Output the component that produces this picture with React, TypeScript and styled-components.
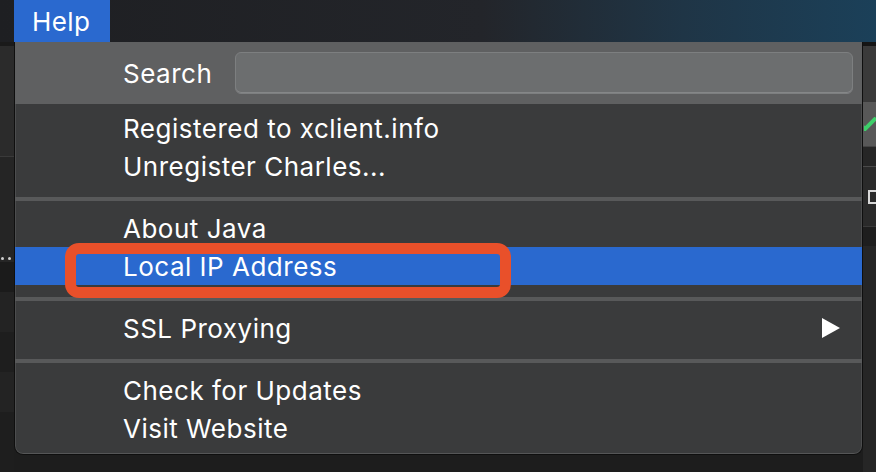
import React from "react";
import styled, { createGlobalStyle } from "styled-components";

const GlobalStyle = createGlobalStyle`
  html, body { margin: 0; padding: 0; background: #1d1d1d; overflow: hidden; }
  * { box-sizing: border-box; }
`;

const Screen = styled.div`
  width: 876px;
  height: 472px;
  display: flex;
  flex-direction: column;
  font-family: Inter, "Liberation Sans", sans-serif;
  color: #fff;
  background: #1d1d1d;
  overflow: hidden;
`;

const TopBar = styled.div`
  height: 42px;
  flex: none;
  display: flex;
  padding-left: 14px;
  background: linear-gradient(90deg, #1e1f22 0%, #23252a 55%, #1f3546 78%, #1b4059 100%);
`;

const TopMenu = styled.div`
  width: 96px;
  height: 42px;
  display: flex;
  align-items: center;
  padding-left: 18px;
  background: #2a69cf;
  font-size: 26px;
  letter-spacing: 0.4px;
`;

const Body = styled.div`
  flex: 1;
  display: flex;
  min-height: 0;
`;

const SideStrip = styled.div<{ $w: number }>`
  width: ${(p) => p.$w}px;
  flex: none;
  display: flex;
  flex-direction: column;
  background: #242424;
`;

const StripBand = styled.div<{ $h: number; $bg: string; $line?: string }>`
  height: ${(p) => p.$h}px;
  flex: none;
  background: ${(p) => p.$bg};
  border-top: ${(p) => (p.$line ? `1px solid ${p.$line}` : "none")};
  display: flex;
  align-items: center;
  gap: 4px;
  padding-left: 1px;
  overflow: hidden;
`;

const Dot = styled.span`
  width: 3px;
  height: 3px;
  border-radius: 50%;
  background: #cfcfcf;
`;

const DBox = styled.span`
  margin-left: 4px;
  width: 10px;
  height: 14px;
  border: 2px solid #d8d8d8;
  border-right: none;
`;

const MenuColumn = styled.div`
  flex: 1;
  display: flex;
  flex-direction: column;
  background: #1d1d1d;
`;

const Menu = styled.div`
  height: 413px;
  flex: none;
  display: flex;
  flex-direction: column;
  background: #3a3b3c;
  border-left: 1px solid #0f0f0f;
  border-right: 1px solid #0f0f0f;
  border-bottom: 1px solid #0f0f0f;
  border-radius: 0 0 9px 9px;
  box-shadow: inset 1px 0 0 #4c4d4e, inset -1px 0 0 #4c4d4e, inset 0 -1px 0 #555657;
  overflow: hidden;
`;

const SearchHeader = styled.div`
  height: 62px;
  flex: none;
  display: flex;
  align-items: center;
  gap: 23px;
  padding: 0 9px 0 108px;
  background: #5f6061;
`;

const Label = styled.span`
  font-size: 26px;
  letter-spacing: 0.5px;
  white-space: nowrap;
`;

const SearchField = styled.div`
  flex: 1;
  height: 42px;
  border-radius: 6px;
  background: #6c6e6f;
  border: 1px solid #7d7f80;
  box-shadow: inset 0 -1px 0 #858788;
`;

const Items = styled.div`
  display: flex;
  flex-direction: column;
  padding-top: 5px;
`;

const Row = styled.div<{ $active?: boolean }>`
  position: relative;
  height: 38px;
  flex: none;
  display: flex;
  align-items: center;
  justify-content: space-between;
  padding: 0 22px 0 108px;
  background: ${(p) => (p.$active ? "#2a69cf" : "transparent")};
`;

const Separator = styled.div`
  height: 24px;
  flex: none;
  display: flex;
  align-items: center;
  padding-bottom: 7px;
  padding-top: 11px;

  &::before {
    content: "";
    display: block;
    width: 100%;
    height: 4px;
    background: #58595a;
  }
`;

const Annotation = styled.div`
  position: absolute;
  left: 50px;
  top: -4px;
  width: 446px;
  height: 55px;
  border: 11px solid #e9502a;
  border-radius: 14px;
  pointer-events: none;
`;

const Arrow = () => (
  <svg width="18" height="20" viewBox="0 0 18 20">
    <polygon points="0,0 18,10 0,20" fill="#ffffff" />
  </svg>
);

export default function App() {
  return (
    <>
      <GlobalStyle />
      <Screen>
        <TopBar>
          <TopMenu>Help</TopMenu>
        </TopBar>
        <Body>
          <SideStrip $w={14}>
            <StripBand $h={4} $bg="#1a1a1a" />
            <StripBand $h={110} $bg="#2b2b2b" />
            <StripBand $h={98} $bg="#252525" $line="#3a3a3a" />
            <StripBand $h={8} $bg="#262626">
              <Dot />
              <Dot />
            </StripBand>
            <StripBand $h={30} $bg="#1b1b1b" />
            <StripBand $h={40} $bg="#232323" />
            <StripBand $h={40} $bg="#1e1e1e" />
            <StripBand $h={40} $bg="#232323" />
            <StripBand $h={60} $bg="#1e1e1e" />
          </SideStrip>
          <MenuColumn>
            <Menu>
              <SearchHeader>
                <Label>Search</Label>
                <SearchField />
              </SearchHeader>
              <Items>
                <Row>
                  <Label>Registered to xclient.info</Label>
                </Row>
                <Row>
                  <Label>Unregister Charles...</Label>
                </Row>
                <Separator />
                <Row>
                  <Label>About Java</Label>
                </Row>
                <Row $active>
                  <Label>Local IP Address</Label>
                  <Annotation />
                </Row>
                <Separator />
                <Row>
                  <Label>SSL Proxying</Label>
                  <Arrow />
                </Row>
                <Separator />
                <Row>
                  <Label>Check for Updates</Label>
                </Row>
                <Row>
                  <Label>Visit Website</Label>
                </Row>
              </Items>
            </Menu>
          </MenuColumn>
          <SideStrip $w={13}>
            <StripBand $h={4} $bg="#151515" />
            <StripBand $h={56} $bg="#3a3a3a" />
            <StripBand $h={44} $bg="#585858">
              <svg width="12" height="14" viewBox="0 0 12 14">
                <polyline points="-4,7 1,12 12,1" fill="none" stroke="#3ecf6a" strokeWidth="4" />
              </svg>
            </StripBand>
            <StripBand $h={20} $bg="#262626" $line="#444" />
            <StripBand $h={60} $bg="#2a2a2a" $line="#4a4a4a">
              <DBox />
            </StripBand>
            <StripBand $h={20} $bg="#1e1e1e" $line="#3a3a3a" />
            <StripBand $h={228} $bg="#262626" />
          </SideStrip>
        </Body>
      </Screen>
    </>
  );
}
